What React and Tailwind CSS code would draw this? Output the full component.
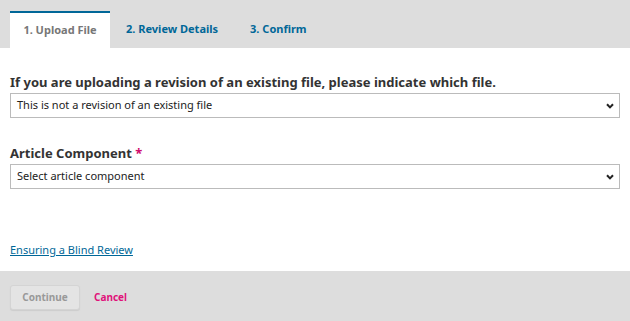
const FONT = { fontFamily: '"Noto Sans", "Open Sans", sans-serif' }

const TABS = ['1. Upload File', '2. Review Details', '3. Confirm']

function Chevron() {
  return (
    <svg width="8" height="6" viewBox="0 0 8 6" className="mr-[5px]">
      <path d="M1 1.2 L4 4.4 L7 1.2" fill="none" stroke="#222" strokeWidth="2" />
    </svg>
  )
}

function Select({ value }) {
  return (
    <div className="flex h-[25px] items-center justify-between border border-[#bbb] bg-white pl-[6px]">
      <span className="text-[11px] text-[#222]">{value}</span>
      <Chevron />
    </div>
  )
}

export default function App() {
  return (
    <div style={FONT} className="h-[321px] w-[630px] overflow-hidden bg-white">
      <div className="flex h-[48px] items-end bg-[#ddd] pl-[10px]">
        {TABS.map((t, i) =>
          i === 0 ? (
            <div
              key={t}
              className="flex h-[37px] w-[100px] items-center justify-center border-t-2 border-[#006798] bg-white text-[11px] font-bold text-[#777]"
            >
              {t}
            </div>
          ) : (
            <div
              key={t}
              className="flex h-[37px] items-center px-[16px] text-[11px] font-bold text-[#006798]"
            >
              {t}
            </div>
          )
        )}
      </div>

      <div className="h-[223px] px-[10px] pt-[25px]">
        <div className="mb-[2px] text-[13px] font-bold leading-[18px] text-[#333]">
          If you are uploading a revision of an existing file, please indicate which file.
        </div>
        <Select value="This is not a revision of an existing file" />

        <div className="mb-[2px] mt-[26px] text-[13px] font-bold leading-[18px] text-[#333]">
          Article Component <span className="text-[#d00a6c]">*</span>
        </div>
        <Select value="Select article component" />

        <a href="#" className="mt-[54px] block text-[11px] leading-[14px] text-[#006798] underline">
          Ensuring a Blind Review
        </a>
      </div>

      <div className="flex h-[50px] items-center gap-[14px] bg-[#ddd] px-[10px]">
        <button className="mt-[2px] h-[25px] w-[70px] rounded-[3px] border border-[#d4d4d4] bg-[#e4e4e4] text-[10px] font-bold text-[#999] shadow-[0_1px_1px_#ccc]">
          Continue
        </button>
        <span className="mt-[2px] text-[10px] font-bold text-[#e0127a]">Cancel</span>
      </div>
    </div>
  )
}
